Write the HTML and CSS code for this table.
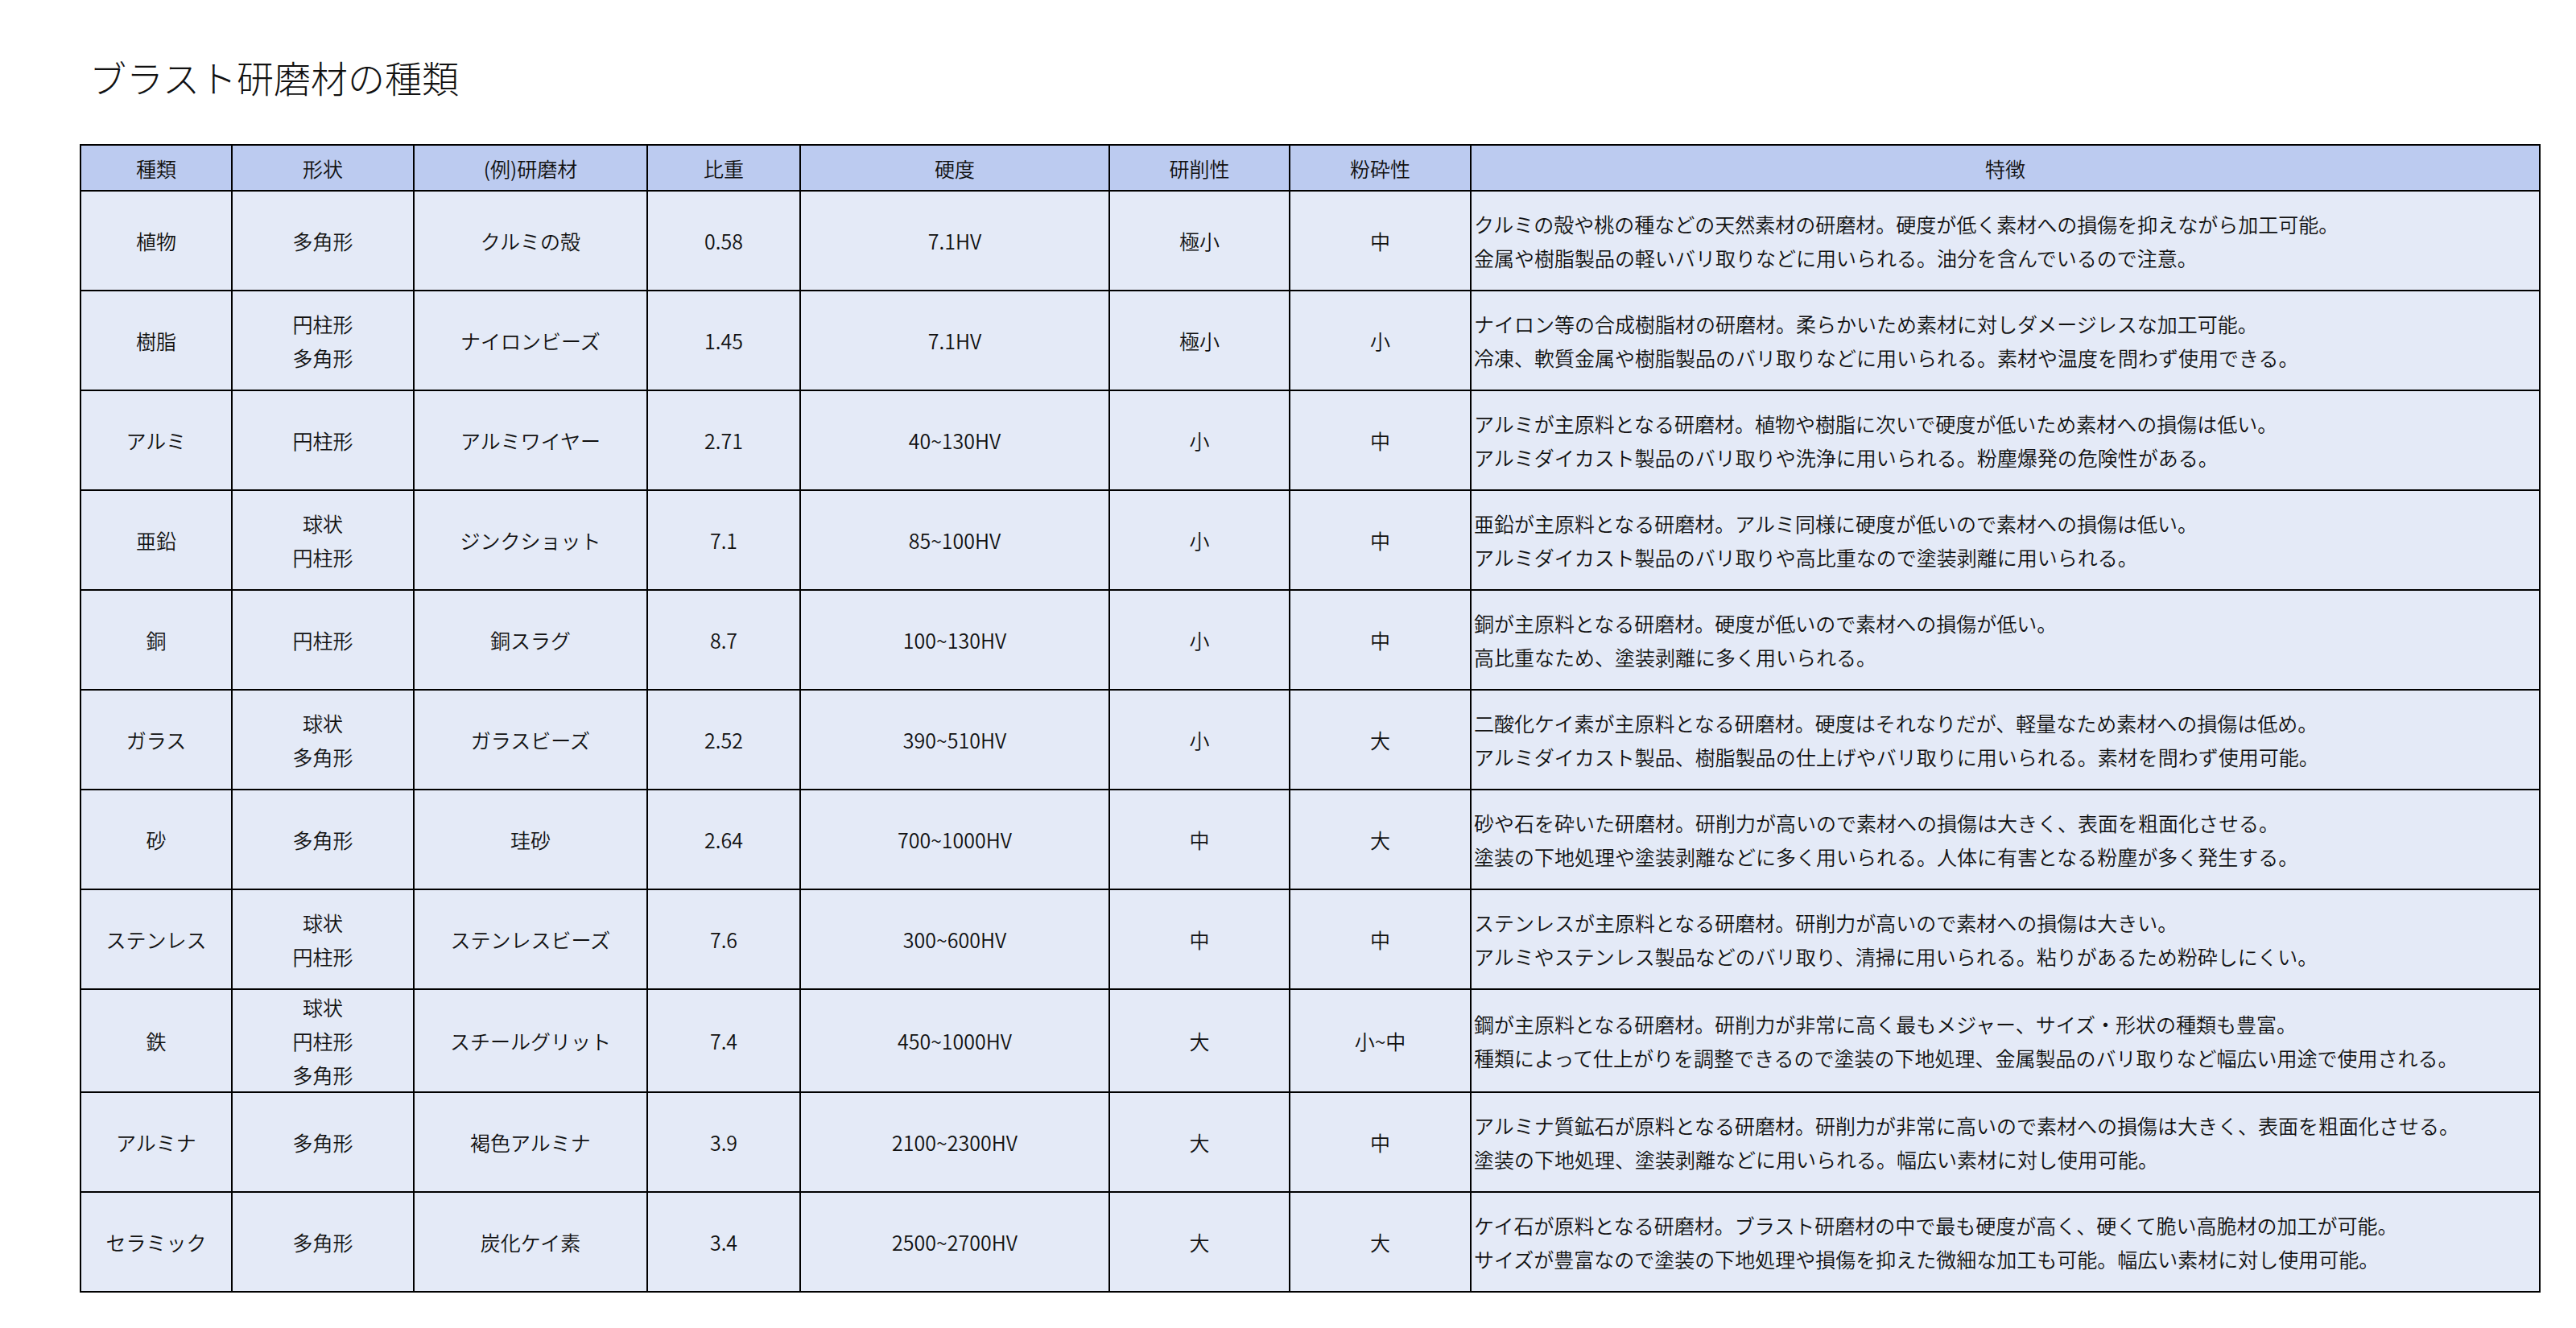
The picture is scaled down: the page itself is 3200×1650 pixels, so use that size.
FILE: index.html
```html
<!DOCTYPE html>
<html lang="ja">
<head>
<meta charset="utf-8">
<title>ブラスト研磨材の種類</title>
<link rel="stylesheet" href="styles.css">
</head>
<body>
<main class="page">
  <h1 class="title">ブラスト研磨材の種類</h1>
  <table class="grid">
    <colgroup>
      <col class="c-kind"><col class="c-shape"><col class="c-example"><col class="c-sg"><col class="c-hard"><col class="c-grind"><col class="c-crush"><col class="c-desc">
    </colgroup>
    <thead>
      <tr class="head">
        <th>種類</th><th>形状</th><th>(例)研磨材</th><th>比重</th><th>硬度</th><th>研削性</th><th>粉砕性</th><th>特徴</th>
      </tr>
    </thead>
    <tbody>
      <tr>
        <td>植物</td><td>多角形</td><td>クルミの殻</td><td>0.58</td><td>7.1HV</td><td>極小</td><td>中</td>
        <td class="desc">クルミの殻や桃の種などの天然素材の研磨材。硬度が低く素材への損傷を抑えながら加工可能。<br>金属や樹脂製品の軽いバリ取りなどに用いられる。油分を含んでいるので注意。</td>
      </tr>
      <tr>
        <td>樹脂</td><td>円柱形<br>多角形</td><td>ナイロンビーズ</td><td>1.45</td><td>7.1HV</td><td>極小</td><td>小</td>
        <td class="desc">ナイロン等の合成樹脂材の研磨材。柔らかいため素材に対しダメージレスな加工可能。<br>冷凍、軟質金属や樹脂製品のバリ取りなどに用いられる。素材や温度を問わず使用できる。</td>
      </tr>
      <tr>
        <td>アルミ</td><td>円柱形</td><td>アルミワイヤー</td><td>2.71</td><td>40~130HV</td><td>小</td><td>中</td>
        <td class="desc">アルミが主原料となる研磨材。植物や樹脂に次いで硬度が低いため素材への損傷は低い。<br>アルミダイカスト製品のバリ取りや洗浄に用いられる。粉塵爆発の危険性がある。</td>
      </tr>
      <tr>
        <td>亜鉛</td><td>球状<br>円柱形</td><td>ジンクショット</td><td>7.1</td><td>85~100HV</td><td>小</td><td>中</td>
        <td class="desc">亜鉛が主原料となる研磨材。アルミ同様に硬度が低いので素材への損傷は低い。<br>アルミダイカスト製品のバリ取りや高比重なので塗装剥離に用いられる。</td>
      </tr>
      <tr>
        <td>銅</td><td>円柱形</td><td>銅スラグ</td><td>8.7</td><td>100~130HV</td><td>小</td><td>中</td>
        <td class="desc">銅が主原料となる研磨材。硬度が低いので素材への損傷が低い。<br>高比重なため、塗装剥離に多く用いられる。</td>
      </tr>
      <tr>
        <td>ガラス</td><td>球状<br>多角形</td><td>ガラスビーズ</td><td>2.52</td><td>390~510HV</td><td>小</td><td>大</td>
        <td class="desc">二酸化ケイ素が主原料となる研磨材。硬度はそれなりだが、軽量なため素材への損傷は低め。<br>アルミダイカスト製品、樹脂製品の仕上げやバリ取りに用いられる。素材を問わず使用可能。</td>
      </tr>
      <tr>
        <td>砂</td><td>多角形</td><td>珪砂</td><td>2.64</td><td>700~1000HV</td><td>中</td><td>大</td>
        <td class="desc">砂や石を砕いた研磨材。研削力が高いので素材への損傷は大きく、表面を粗面化させる。<br>塗装の下地処理や塗装剥離などに多く用いられる。人体に有害となる粉塵が多く発生する。</td>
      </tr>
      <tr>
        <td>ステンレス</td><td>球状<br>円柱形</td><td>ステンレスビーズ</td><td>7.6</td><td>300~600HV</td><td>中</td><td>中</td>
        <td class="desc">ステンレスが主原料となる研磨材。研削力が高いので素材への損傷は大きい。<br>アルミやステンレス製品などのバリ取り、清掃に用いられる。粘りがあるため粉砕しにくい。</td>
      </tr>
      <tr>
        <td>鉄</td><td>球状<br>円柱形<br>多角形</td><td>スチールグリット</td><td>7.4</td><td>450~1000HV</td><td>大</td><td>小~中</td>
        <td class="desc">鋼が主原料となる研磨材。研削力が非常に高く最もメジャー、サイズ・形状の種類も豊富。<br>種類によって仕上がりを調整できるので塗装の下地処理、金属製品のバリ取りなど幅広い用途で使用される。</td>
      </tr>
      <tr>
        <td>アルミナ</td><td>多角形</td><td>褐色アルミナ</td><td>3.9</td><td>2100~2300HV</td><td>大</td><td>中</td>
        <td class="desc">アルミナ質鉱石が原料となる研磨材。研削力が非常に高いので素材への損傷は大きく、表面を粗面化させる。<br>塗装の下地処理、塗装剥離などに用いられる。幅広い素材に対し使用可能。</td>
      </tr>
      <tr>
        <td>セラミック</td><td>多角形</td><td>炭化ケイ素</td><td>3.4</td><td>2500~2700HV</td><td>大</td><td>大</td>
        <td class="desc">ケイ石が原料となる研磨材。ブラスト研磨材の中で最も硬度が高く、硬くて脆い高脆材の加工が可能。<br>サイズが豊富なので塗装の下地処理や損傷を抑えた微細な加工も可能。幅広い素材に対し使用可能。</td>
      </tr>
    </tbody>
  </table>
</main>
</body>
</html>
```

FILE: styles.css
```css
html, body {
  margin: 0;
  padding: 0;
  background: #ffffff;
}

body {
  font-family: "Noto Sans CJK JP", "Noto Sans", sans-serif;
  color: #111111;
}

.page {
  padding: 65px 0 0 99px;
}

.title {
  margin: 0 0 54px 12px;
  font-size: 46px;
  line-height: 60px;
  font-weight: 300;
  color: #111111;
}

.grid {
  border-collapse: collapse;
  table-layout: fixed;
  width: 3055px;
  border: 2px solid #000;
  font-size: 25px;
  line-height: 42px;
  font-weight: 350;
}

.c-kind { width: 188px; }
.c-shape { width: 226px; }
.c-example { width: 290px; }
.c-sg { width: 190px; }
.c-hard { width: 384px; }
.c-grind { width: 224px; }
.c-crush { width: 225px; }
.c-desc { width: 1328px; }

.grid th,
.grid td {
  border: 2px solid #000;
  padding: 0;
  text-align: center;
  vertical-align: middle;
  white-space: nowrap;
}

.head {
  height: 57px;
}

.head th {
  background: #bccbf0;
  font-weight: 350;
}

.grid tbody tr {
  height: 124px;
}

.grid td {
  background: #e4eaf7;
}

.grid td.desc {
  text-align: left;
  padding-left: 3px;
}
```
